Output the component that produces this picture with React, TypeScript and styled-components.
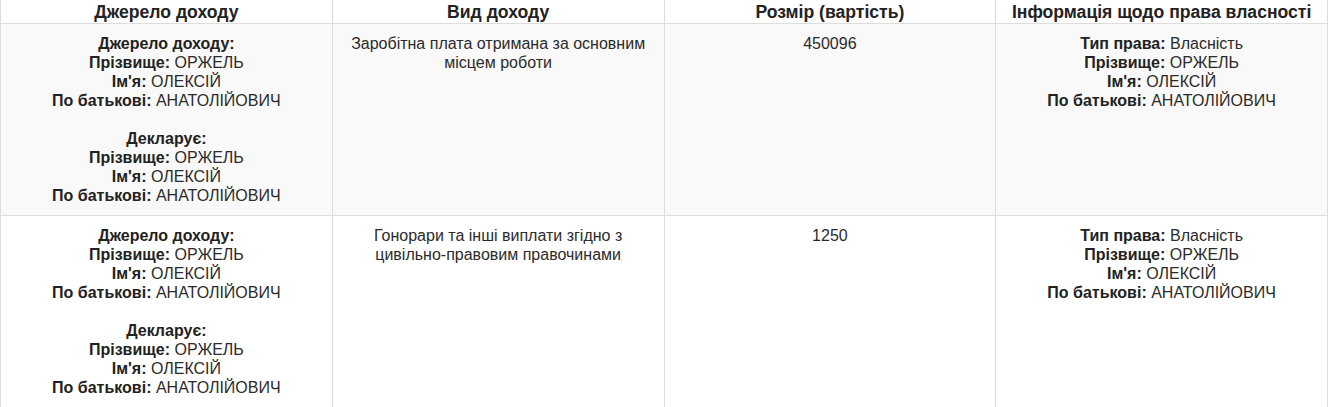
import React from 'react';
import styled, { createGlobalStyle } from 'styled-components';

const GlobalStyle = createGlobalStyle`
  body {
    margin: 0;
    background: #fff;
    font-family: "Liberation Sans", Arial, sans-serif;
    color: #2b2b2b;
  }
`;

const Table = styled.table`
  width: 1328px;
  border-collapse: collapse;
  table-layout: fixed;
  font-size: 16px;
  line-height: 19px;
`;

const HeadCell = styled.th`
  border: 1px solid #ddd;
  border-top: none;
  padding: 1px 4px 0;
  height: 22px;
  font-size: 17.6px;
  font-weight: 700;
  line-height: 22px;
  text-align: center;
  color: #222;
`;

const Row = styled.tr<{ $striped?: boolean }>`
  background: ${(p) => (p.$striped ? '#f9f9f9' : '#fff')};
`;

const Cell = styled.td`
  border: 1px solid #ddd;
  padding: 10px 8px 10px;
  text-align: center;
  vertical-align: top;
`;

const Line = styled.div``;

const Gap = styled.div`
  height: 19px;
`;

const Label = styled.b`
  font-weight: 700;
  color: #222;
`;

type Person = { surname: string; name: string; patronymic: string };

const person: Person = { surname: 'ОРЖЕЛЬ', name: 'ОЛЕКСІЙ', patronymic: 'АНАТОЛІЙОВИЧ' };

const PersonLines: React.FC<{ p: Person }> = ({ p }) => (
  <>
    <Line><Label>Прізвище:</Label> {p.surname}</Line>
    <Line><Label>Ім'я:</Label> {p.name}</Line>
    <Line><Label>По батькові:</Label> {p.patronymic}</Line>
  </>
);

const rows = [
  { kind: 'Заробітна плата отримана за основним місцем роботи', amount: '450096' },
  { kind: 'Гонорари та інші виплати згідно з цивільно-правовим правочинами', amount: '1250' },
];

export default function App() {
  return (
    <>
      <GlobalStyle />
      <Table>
        <thead>
          <tr>
            <HeadCell>Джерело доходу</HeadCell>
            <HeadCell>Вид доходу</HeadCell>
            <HeadCell>Розмір (вартість)</HeadCell>
            <HeadCell>Інформація щодо права власності</HeadCell>
          </tr>
        </thead>
        <tbody>
          {rows.map((r, i) => (
            <Row key={i} $striped={i % 2 === 0}>
              <Cell>
                <Line><Label>Джерело доходу:</Label></Line>
                <PersonLines p={person} />
                <Gap />
                <Line><Label>Декларує:</Label></Line>
                <PersonLines p={person} />
              </Cell>
              <Cell>{r.kind}</Cell>
              <Cell>{r.amount}</Cell>
              <Cell>
                <Line><Label>Тип права:</Label> Власність</Line>
                <PersonLines p={person} />
              </Cell>
            </Row>
          ))}
        </tbody>
      </Table>
    </>
  );
}
